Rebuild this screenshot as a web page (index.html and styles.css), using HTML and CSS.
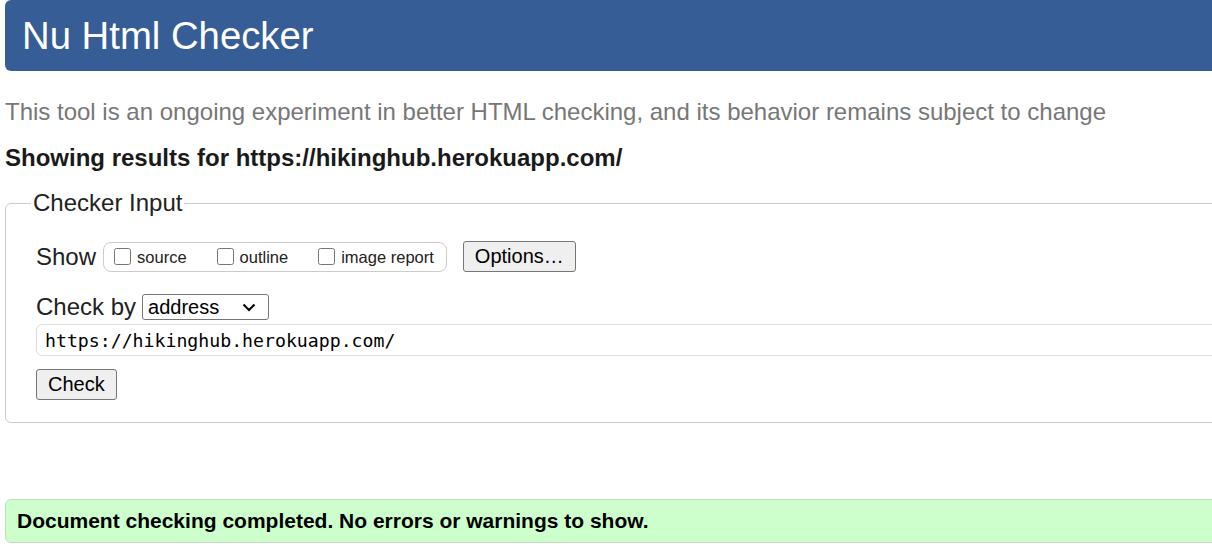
FILE: index.html
```html
<!DOCTYPE html>
<html lang="en">
<head>
<meta charset="utf-8">
<title>Showing results for https://hikinghub.herokuapp.com/ - Nu Html Checker</title>
<link rel="stylesheet" href="styles.css">
</head>
<body>
<div class="page">
  <header class="masthead">
    <h1>Nu Html Checker</h1>
  </header>
  <p class="tagline">This tool is an ongoing experiment in better HTML checking, and its behavior remains subject to change</p>
  <p class="results">Showing results for https://hikinghub.herokuapp.com/</p>
  <form class="checker-form">
    <fieldset class="checker">
      <legend class="checker-legend">Checker Input</legend>
      <div class="show-row">
        <span class="row-label">Show</span>
        <span class="show-box">
          <label class="opt"><input type="checkbox" class="cb"><span>source</span></label>
          <label class="opt"><input type="checkbox" class="cb"><span>outline</span></label>
          <label class="opt"><input type="checkbox" class="cb"><span>image report</span></label>
        </span>
        <button type="button" class="btn">Options…</button>
      </div>
      <div class="checkby-row">
        <span class="row-label">Check by</span>
        <span class="select">
          <span class="select-text">address</span>
          <svg class="chev" width="14" height="9" viewBox="0 0 14 9"><path d="M1.5 1.5 L7 7 L12.5 1.5" fill="none" stroke="#000" stroke-width="2"/></svg>
        </span>
      </div>
      <input type="text" class="url" value="https://hikinghub.herokuapp.com/">
      <div class="submit-row">
        <button type="button" class="btn">Check</button>
      </div>
    </fieldset>
  </form>
  <div class="status">Document checking completed. No errors or warnings to show.</div>
</div>
</body>
</html>
```

FILE: styles.css
```css
html, body {
  margin: 0;
  padding: 0;
  overflow: hidden;
  background: #fff;
}
body {
  font-family: "Liberation Sans", Arial, sans-serif;
  color: #222;
}
.page {
  width: 1500px;
  padding-left: 5px;
}
.masthead {
  background: #365d95;
  color: #fff;
  height: 71px;
  border-radius: 6px;
  padding-left: 17px;
}
.masthead h1 {
  margin: 0;
  font-size: 38.3px;
  font-weight: normal;
  line-height: 71px;
}
.tagline {
  margin: 27px 0 0;
  font-size: 24px;
  line-height: 28px;
  color: #777;
}
.results {
  margin: 18px 0 0;
  font-size: 24px;
  line-height: 28px;
  font-weight: bold;
  color: #1a1a1a;
}
.checker-form {
  margin: 17px 0 0;
}
.checker {
  margin: 0;
  border: 1px solid #ccc;
  border-radius: 6px;
  padding: 24px 30px 22px;
}
.checker-legend {
  font-size: 24px;
  line-height: 28px;
  padding: 0 2px;
  margin-left: -5px;
  color: #222;
}
.show-row {
  display: flex;
  align-items: center;
  height: 31px;
}
.row-label {
  font-size: 24px;
  line-height: 28px;
}
.show-box {
  display: flex;
  align-items: center;
  height: 28px;
  margin-left: 7px;
  border: 1px solid #ccc;
  border-radius: 8px;
  padding: 0 12px 0 10px;
  gap: 30px;
}
.opt {
  display: flex;
  align-items: center;
  font-size: 16.5px;
  gap: 6px;
}
.opt span {
  position: relative;
  top: 1px;
}
.cb {
  width: 17px;
  height: 17px;
  margin: 0;
}
.btn {
  font-family: "Liberation Sans", Arial, sans-serif;
  font-size: 20px;
  height: 31px;
  padding: 0 11px;
  background: #efefef;
  border: 1px solid #767676;
  border-radius: 3px;
  color: #000;
}
.show-row .btn {
  margin-left: 16px;
}
.checkby-row {
  display: flex;
  align-items: center;
  margin-top: 22px;
  height: 26px;
}
.select {
  display: flex;
  align-items: center;
  justify-content: space-between;
  box-sizing: border-box;
  width: 127px;
  height: 26px;
  margin-left: 6px;
  border: 1px solid #767676;
  border-radius: 3px;
  padding: 0 12px 0 5px;
  font-size: 20px;
  color: #000;
}
.url {
  display: block;
  box-sizing: border-box;
  width: 1400px;
  height: 32px;
  margin-top: 4px;
  border: 1px solid #ddd;
  border-radius: 6px;
  padding: 0 8px;
  font-family: "DejaVu Sans Mono", "Liberation Mono", monospace;
  font-size: 18.2px;
  color: #000;
}
.submit-row {
  margin-top: 13px;
  display: flex;
}
.status {
  margin-top: 76px;
  border: 1px solid #c4d8c4;
  border-radius: 6px;
  background: #ccffcc;
  padding: 9px 11px;
  font-size: 21px;
  line-height: 24px;
  font-weight: bold;
  color: #000;
}
```
